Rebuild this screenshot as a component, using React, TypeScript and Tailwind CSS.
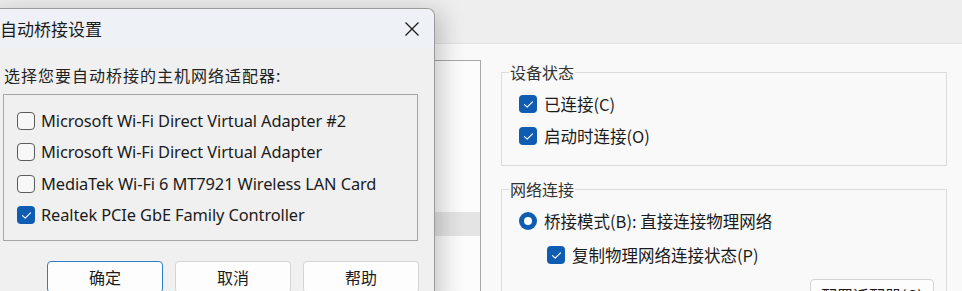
import React from "react";

const CJK = '"Noto Sans CJK SC", "Noto Sans", sans-serif';
const LAT = '"Noto Sans", "Noto Sans CJK SC", sans-serif';

function Check({ checked }: { checked: boolean }) {
  return checked ? (
    <span className="flex h-[18px] w-[18px] shrink-0 items-center justify-center rounded-[4px] bg-[#0f5cb3]">
      <svg width="11" height="9" viewBox="0 0 11 9" fill="none">
        <path d="M1.5 4.6 L4.2 7.2 L9.5 1.8" stroke="#ffffff" strokeWidth="1.1" strokeLinecap="round" strokeLinejoin="round" />
      </svg>
    </span>
  ) : (
    <span className="h-[18px] w-[18px] shrink-0 rounded-[4px] border border-[#5c5c5c] bg-[#f7f7f7]" />
  );
}

function Radio() {
  return (
    <span className="flex h-[18px] w-[18px] shrink-0 items-center justify-center rounded-full bg-[#0f5cb3]">
      <span className="h-[8px] w-[8px] rounded-full bg-white" />
    </span>
  );
}

export default function App() {
  const adapters = [
    { t: "Microsoft Wi-Fi Direct Virtual Adapter #2", c: false },
    { t: "Microsoft Wi-Fi Direct Virtual Adapter", c: false },
    { t: "MediaTek Wi-Fi 6 MT7921 Wireless LAN Card", c: false },
    { t: "Realtek PCIe GbE Family Controller", c: true },
  ];
  return (
    <div className="relative h-[291px] w-[962px] overflow-hidden bg-[#f9f9f9] text-[#1b1b1b]" style={{ fontFamily: CJK }}>
      {/* background window */}
      <div className="flex h-full flex-col">
        <div className="h-[44px] shrink-0 border-b border-[#e2e2e2] bg-[#eeeeee]" />
        <div className="flex flex-1 pt-[16px]">
          <div className="ml-[20px] flex h-[260px] w-[461px] flex-col border border-[#a8a8a8] bg-[#fcfcfc]">
            <div className="h-[151px]" />
            <div className="h-[24px] bg-[#e4e4e4]" />
          </div>
          <div className="ml-[20px] flex w-[446px] flex-col gap-[13px] pt-[2px]">
            <fieldset className="h-[104px] border border-[#dcdcdc] pl-[17px]">
              <legend className="ml-[-10px] px-[1px] text-[16px] leading-[20px] text-[#333]">设备状态</legend>
              <div className="mt-[13px] flex flex-col gap-[14px] text-[16.5px] leading-[18px]">
                <div className="flex items-center gap-[7px]"><Check checked /><span>已连接(C)</span></div>
                <div className="flex items-center gap-[7px]"><Check checked /><span>启动时连接(O)</span></div>
              </div>
            </fieldset>
            <fieldset className="h-[130px] border border-[#dcdcdc] pl-[17px]">
              <legend className="ml-[-10px] px-[1px] text-[16px] leading-[20px] text-[#333]">网络连接</legend>
              <div className="mt-[13px] flex items-center gap-[7px] text-[16.5px] leading-[18px]"><Radio /><span>桥接模式(B): 直接连接物理网络</span></div>
              <div className="ml-[28px] mt-[16px] flex items-center gap-[7px] text-[16.5px] leading-[18px]"><Check checked /><span>复制物理网络连接状态(P)</span></div>
              <div className="mt-[15px] flex justify-end pr-[12px]">
                <div className="flex h-[32px] w-[124px] items-center justify-center rounded-[4px] border border-[#d4d4d4] bg-[#fdfdfd] text-[16px]">配置适配器(G)</div>
              </div>
            </fieldset>
          </div>
        </div>
      </div>

      {/* dialog */}
      <div className="absolute left-[-10px] top-[8px] flex h-[300px] w-[445px] flex-col overflow-hidden rounded-tr-[8px] border-r border-t border-[#9a9a9a] bg-[#f0f0f0] shadow-[6px_4px_24px_rgba(0,0,0,0.22)]">
        <div className="flex h-[39px] shrink-0 items-center justify-between bg-[#eef2f7] pl-[10px] pr-[14px]">
          <span className="text-[17px] leading-[20px]">自动桥接设置</span>
          <svg width="16" height="16" viewBox="0 0 16 16" fill="none">
            <path d="M1.5 1.5 L14.5 14.5 M14.5 1.5 L1.5 14.5" stroke="#1b1b1b" strokeWidth="1.3" />
          </svg>
        </div>
        <div className="flex flex-col pl-[14px]">
          <div className="mt-[17px] text-[16px] leading-[20px] tracking-[1px] text-[#222]">选择您要自动桥接的主机网络适配器:</div>
          <div className="ml-[-1px] mt-[9px] flex h-[147px] w-[415px] flex-col gap-[13.4px] border border-[#a6a6a6] pl-[13px] pt-[17px]" style={{ fontFamily: LAT }}>
            {adapters.map((a) => (
              <div key={a.t} className="flex h-[18px] items-center gap-[6px] text-[16.4px] leading-[18px]">
                <Check checked={a.c} />
                <span className="tracking-[-0.1px]">{a.t}</span>
              </div>
            ))}
          </div>
          <div className="ml-[43px] mt-[20px] flex gap-[12px]">
            <div className="flex h-[32px] w-[116px] items-center justify-center rounded-[4px] border border-[#2f7dc6] bg-[#fdfdfd] text-[16px]">确定</div>
            <div className="flex h-[32px] w-[116px] items-center justify-center rounded-[4px] border border-[#d4d4d4] bg-[#fdfdfd] text-[16px]">取消</div>
            <div className="flex h-[32px] w-[116px] items-center justify-center rounded-[4px] border border-[#d4d4d4] bg-[#fdfdfd] text-[16px]">帮助</div>
          </div>
        </div>
      </div>
    </div>
  );
}
